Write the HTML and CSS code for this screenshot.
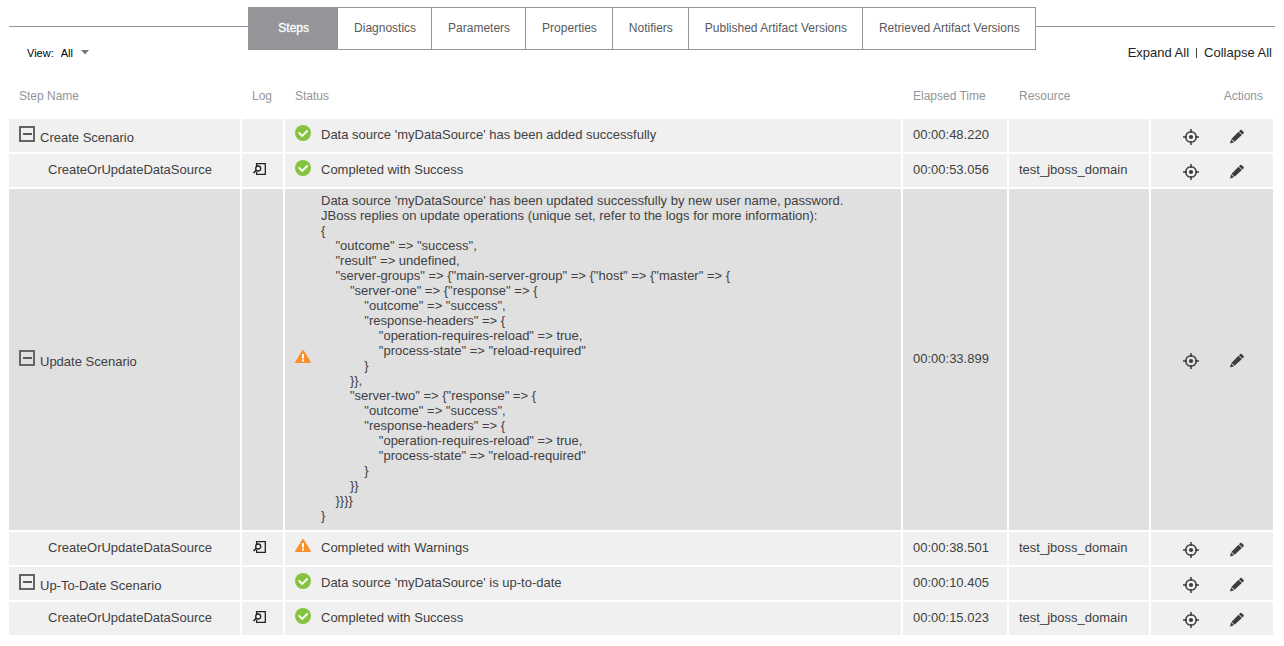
FILE: index.html
```html
<!DOCTYPE html>
<html lang="en">
<head>
<meta charset="utf-8">
<title>Steps</title>
<link rel="stylesheet" href="styles.css">
</head>
<body>
<svg class="sprite" aria-hidden="true">
  <symbol id="ok" viewBox="0 0 16 16"><circle cx="8" cy="8" r="8" fill="#86c440"/><path d="M3.6 7.3 7.2 10.9 12.6 5.5" fill="none" stroke="#fff" stroke-width="1.8"/></symbol>
  <symbol id="warn" viewBox="0 0 16 16"><path d="M8 1 Q8.6 1 9 1.7 L15.8 13 Q16.2 14 15 14 H1 Q-.2 14 .2 13 L7 1.7 Q7.4 1 8 1Z" fill="#f9902b"/><path d="M8 5v4.500M8 10.500v2" stroke="#fff" stroke-width="2"/></symbol>
  <symbol id="minus" viewBox="0 0 16 16"><path d="M1 1h14v14H1z" fill="none" stroke="#636466" stroke-width="2"/><path d="M4 8h9" stroke="#58595b" stroke-width="2"/></symbol>
  <symbol id="log" viewBox="0 0 14 12"><path d="M4.600 3.200V.7h8.700v10.600H4.600V8.800" fill="none" stroke="#222" stroke-width="1.300"/><circle cx="6.200" cy="5.500" r="2.500" fill="none" stroke="#222" stroke-width="1.300"/><path d="M4.500 7.200 1.500 10" stroke="#222" stroke-width="1.600"/></symbol>
  <symbol id="target" viewBox="0 0 16 16"><circle cx="8" cy="8" r="5.300" fill="none" stroke="#3d3d3f" stroke-width="1.500"/><circle cx="8" cy="8" r="2.100" fill="#3d3d3f"/><path d="M8 0v4M8 12v4M0 8h4M12 8h4" stroke="#3d3d3f" stroke-width="1.500"/></symbol>
  <symbol id="pencil" viewBox="0 0 16 16"><path d="M11.200 1Q11.900.4 12.600 1l2 2q.6.7 0 1.300L13.400 5.500 10 2.200ZM9.500 2.700 12.900 6 5.600 12.800 2.500 9.700ZM2.100 10.300 5 13.200 1 14.500Z" fill="#3d3d3f"/></symbol>
</svg>
<header class="top">
  <div class="side side-left">
    <label for="view">View:</label>
    <select id="view" class="view"><option>All</option></select>
    <svg class="caret" viewBox="0 0 8 5" aria-hidden="true"><path d="M0 0h8L4 4.500z"/></svg>
  </div>
  <nav class="tabs">
    <a class="tab active" href="#steps">Steps</a>
    <a class="tab" href="#diagnostics">Diagnostics</a>
    <a class="tab" href="#parameters">Parameters</a>
    <a class="tab" href="#properties">Properties</a>
    <a class="tab" href="#notifiers">Notifiers</a>
    <a class="tab" href="#published">Published Artifact Versions</a>
    <a class="tab" href="#retrieved">Retrieved Artifact Versions</a>
  </nav>
  <div class="side side-right">
    <a href="#expand">Expand All</a>
    <span class="bar"></span>
    <a href="#collapse">Collapse All</a>
  </div>
</header>
<main>
<table class="steps">
  <colgroup><col class="c-name"><col class="c-log"><col><col class="c-time"><col class="c-res"><col class="c-act"></colgroup>
  <thead><tr><th>Step Name</th><th>Log</th><th>Status</th><th>Elapsed Time</th><th>Resource</th><th class="right">Actions</th></tr></thead>
  <tbody>
  <tr>
    <td class="parent"><div class="scenario"><button aria-label="Collapse"><svg class="icon"><use href="#minus"/></svg></button>Create Scenario</div></td>
    <td></td>
    <td><div class="status"><svg class="icon"><use href="#ok"/></svg>Data source 'myDataSource' has been added successfully</div></td>
    <td>00:00:48.220</td><td></td>
    <td><div class="actions"><button aria-label="Locate"><svg class="icon"><use href="#target"/></svg></button><button aria-label="Edit"><svg class="icon"><use href="#pencil"/></svg></button></div></td>
  </tr>
  <tr>
    <td class="child">CreateOrUpdateDataSource</td>
    <td><button aria-label="View log"><svg class="log"><use href="#log"/></svg></button></td>
    <td><div class="status"><svg class="icon"><use href="#ok"/></svg>Completed with Success</div></td>
    <td>00:00:53.056</td><td>test_jboss_domain</td>
    <td><div class="actions"><button aria-label="Locate"><svg class="icon"><use href="#target"/></svg></button><button aria-label="Edit"><svg class="icon"><use href="#pencil"/></svg></button></div></td>
  </tr>
  <tr class="selected">
    <td class="parent"><div class="scenario"><button aria-label="Collapse"><svg class="icon"><use href="#minus"/></svg></button>Update Scenario</div></td>
    <td></td>
    <td><div class="status"><svg class="icon"><use href="#warn"/></svg><pre class="message">Data source 'myDataSource' has been updated successfully by new user name, password.
JBoss replies on update operations (unique set, refer to the logs for more information):
{
    "outcome" =&gt; "success",
    "result" =&gt; undefined,
    "server-groups" =&gt; {"main-server-group" =&gt; {"host" =&gt; {"master" =&gt; {
        "server-one" =&gt; {"response" =&gt; {
            "outcome" =&gt; "success",
            "response-headers" =&gt; {
                "operation-requires-reload" =&gt; true,
                "process-state" =&gt; "reload-required"
            }
        }},
        "server-two" =&gt; {"response" =&gt; {
            "outcome" =&gt; "success",
            "response-headers" =&gt; {
                "operation-requires-reload" =&gt; true,
                "process-state" =&gt; "reload-required"
            }
        }}
    }}}}
}</pre></div></td>
    <td>00:00:33.899</td><td></td>
    <td><div class="actions"><button aria-label="Locate"><svg class="icon"><use href="#target"/></svg></button><button aria-label="Edit"><svg class="icon"><use href="#pencil"/></svg></button></div></td>
  </tr>
  <tr>
    <td class="child">CreateOrUpdateDataSource</td>
    <td><button aria-label="View log"><svg class="log"><use href="#log"/></svg></button></td>
    <td><div class="status"><svg class="icon"><use href="#warn"/></svg>Completed with Warnings</div></td>
    <td>00:00:38.501</td><td>test_jboss_domain</td>
    <td><div class="actions"><button aria-label="Locate"><svg class="icon"><use href="#target"/></svg></button><button aria-label="Edit"><svg class="icon"><use href="#pencil"/></svg></button></div></td>
  </tr>
  <tr>
    <td class="parent"><div class="scenario"><button aria-label="Collapse"><svg class="icon"><use href="#minus"/></svg></button>Up-To-Date Scenario</div></td>
    <td></td>
    <td><div class="status"><svg class="icon"><use href="#ok"/></svg>Data source 'myDataSource' is up-to-date</div></td>
    <td>00:00:10.405</td><td></td>
    <td><div class="actions"><button aria-label="Locate"><svg class="icon"><use href="#target"/></svg></button><button aria-label="Edit"><svg class="icon"><use href="#pencil"/></svg></button></div></td>
  </tr>
  <tr>
    <td class="child">CreateOrUpdateDataSource</td>
    <td><button aria-label="View log"><svg class="log"><use href="#log"/></svg></button></td>
    <td><div class="status"><svg class="icon"><use href="#ok"/></svg>Completed with Success</div></td>
    <td>00:00:15.023</td><td>test_jboss_domain</td>
    <td><div class="actions"><button aria-label="Locate"><svg class="icon"><use href="#target"/></svg></button><button aria-label="Edit"><svg class="icon"><use href="#pencil"/></svg></button></div></td>
  </tr>
  </tbody>
</table>
</main>
</body>
</html>
```

FILE: styles.css
```css
* { box-sizing: border-box; }
body {
  margin: 0;
  padding: 7px 9px;
  background: #fff;
  color: #414042;
  font: 13px/15px "Liberation Sans", Arial, sans-serif;
}
.sprite { display: none; }
button {
  display: flex;
  padding: 0;
  border: 0;
  background: none;
  color: inherit;
  cursor: pointer;
}
a { color: inherit; text-decoration: none; }

/* Tab strip, with a rule running out on both sides */
.top { display: grid; grid-template-columns: 1fr auto 1fr; }
.tabs { display: flex; align-self: start; border: 1px solid #939598; }
.tab {
  padding: 13px 15px 14px 16px;
  border-left: 1px solid #939598;
  color: #58595b;
  font-size: 12px;
  line-height: 14px;
}
.tab.active {
  padding-left: 29px;
  padding-right: 29px;
  border-left: 0;
  background: #939598;
  color: #fff;
  -webkit-text-stroke: 0.3px #fff;
}
.tab.active + .tab { border-left: 0; }
.side {
  display: flex;
  align-items: flex-start;
  margin-top: 19px;
  border-top: 1px solid #939598;
  color: #000;
}
.side-left {
  gap: 7px;
  padding: 20px 18px 0;
  font-size: 11px;
  line-height: 13px;
}
.side-right {
  justify-content: flex-end;
  gap: 7px;
  padding: 18px 3px 0;
  color: #231f20;
}
.bar { width: 1px; height: 10px; margin-top: 3px; background: #414042; }
.view {
  appearance: none;
  padding: 0;
  border: 0;
  background: none;
  color: inherit;
  font: inherit;
}
.caret { width: 8px; height: 5px; margin-top: 3px; fill: #77787b; }

/* Steps table */
main { margin: 14px 0 0 -2px; }
.steps {
  width: 100%;
  table-layout: fixed;
  border-collapse: separate;
  border-spacing: 2px;
}
.c-name { width: 231px; }
.c-log { width: 41px; }
.c-time { width: 104px; }
.c-res { width: 140px; }
.c-act { width: 122px; }
.steps th {
  height: 41px;
  padding: 0 10px;
  color: #939598;
  font-size: 12px;
  font-weight: 400;
  text-align: left;
}
.steps th.right { text-align: right; }
.steps td {
  height: 33px;
  padding: 4px 10px 7px;
  background: #f0f0f0;
  vertical-align: middle;
}
.steps .selected td { background: #e0e0e0; }
.steps .parent { padding: 5px 10px 6px; }
.steps .child { padding-left: 39px; }
.icon { flex: none; width: 16px; height: 16px; }
.log { width: 14px; height: 12px; }
.scenario { display: flex; align-items: baseline; gap: 5px; }
.status { display: flex; align-items: center; gap: 10px; }
.status .icon { margin-bottom: 2px; }
.message { margin: 0; font: inherit; }
.actions { display: flex; gap: 30px; padding: 6px 0 0 22px; }
```
